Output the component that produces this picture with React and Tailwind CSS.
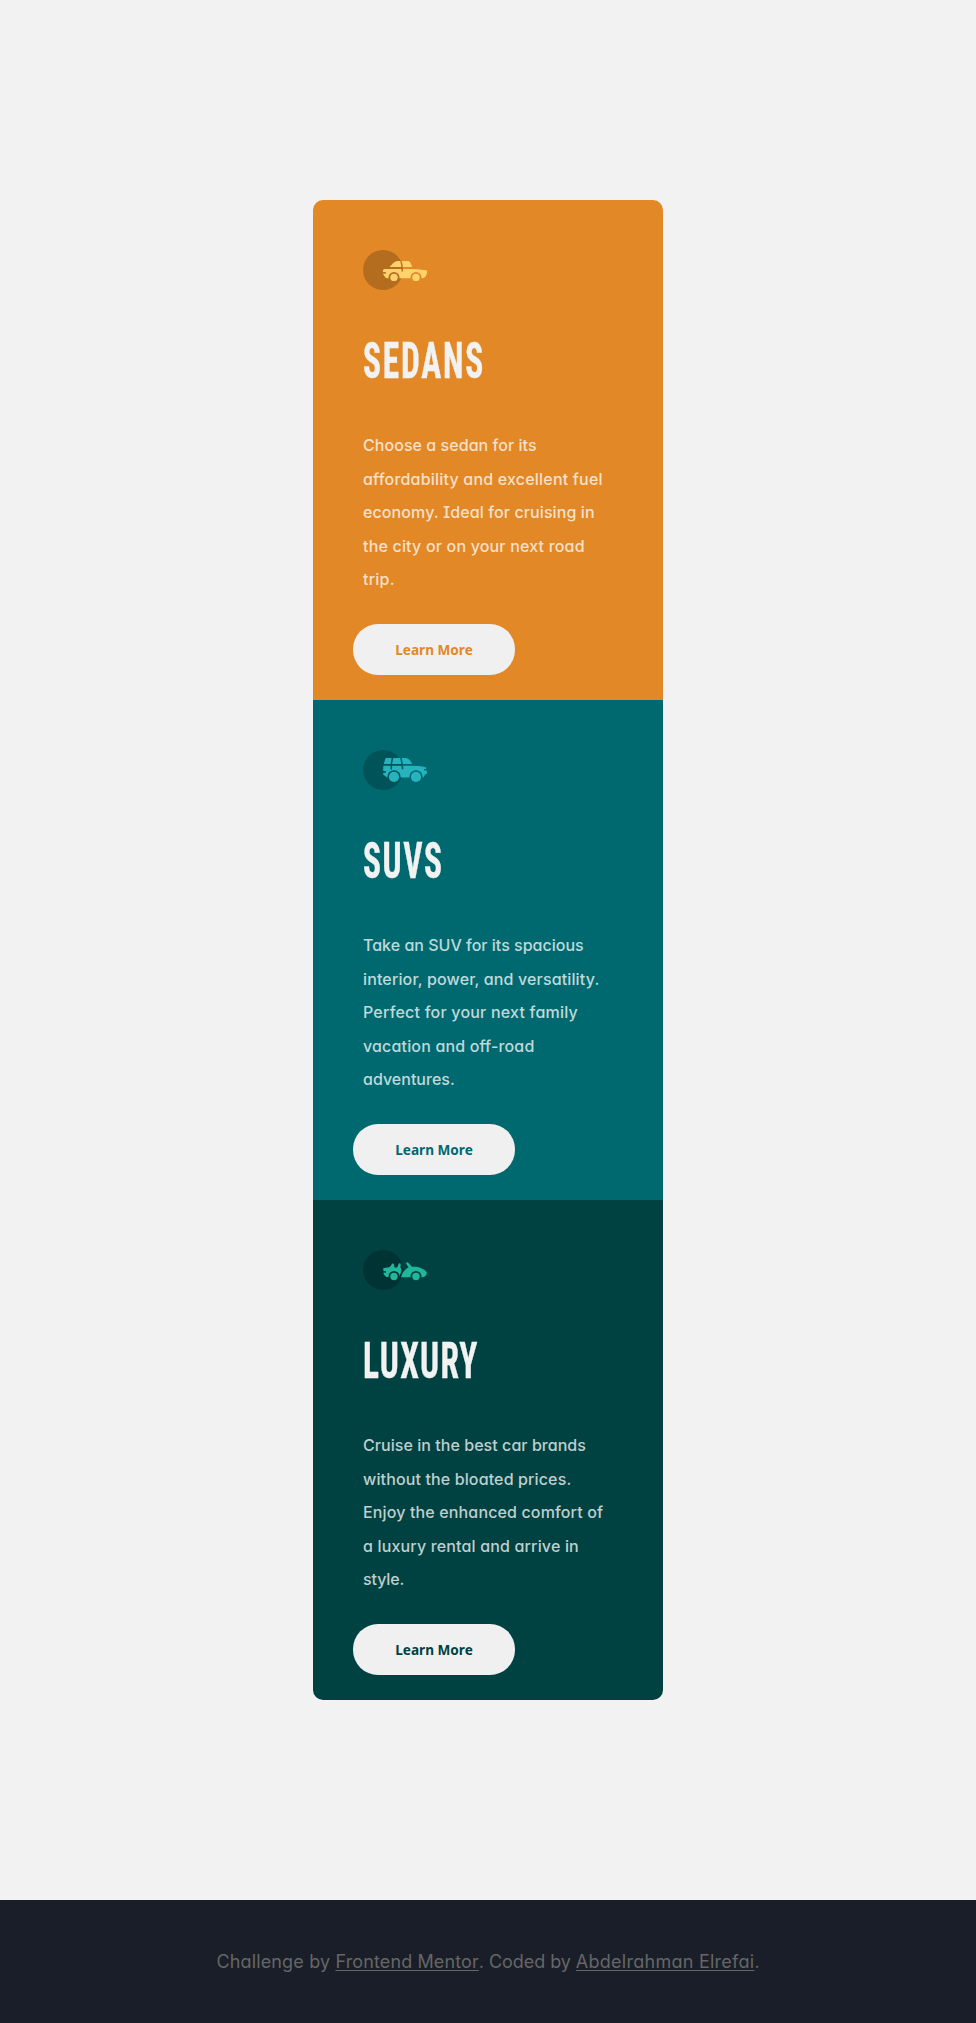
function SedanIcon() {
  return (
    <svg width="64" height="40" viewBox="0 0 64 40" className="block">
      <circle cx="20" cy="20" r="20" fill="#000" opacity="0.2" />
      <mask id="sedan-cut" maskUnits="userSpaceOnUse" x="0" y="0" width="66" height="40">
        <rect width="66" height="40" fill="#fff" />
        <circle cx="31" cy="27.4" r="5.5" fill="#000" />
        <circle cx="53" cy="27.4" r="5.5" fill="#000" />
        <path d="M37.9 10.5C39 13.5 39.4 17 39.4 21.6" fill="none" stroke="#000" strokeWidth="1.6" />
        <path d="M19 22.1H23V23.7H19Z" fill="#000" />
      </mask>
      <g fill="#FFD26C">
        <path
          mask="url(#sedan-cut)"
          d="M26.5 17C29.4 14 31.3 10.9 34.8 10.9H44.2C47.6 10.9 47.8 13.6 49.3 17ZM21 18.9H49.5C55 19.2 59.5 19.5 63.2 20.3C64.8 21.1 64.3 23.5 62.9 25.6C62.2 27.3 61.2 28.3 59 28.3H24.5C22.4 27.8 21.6 26.8 21 25.2L20 24.2V20.2Z"
        />
        <circle cx="31" cy="27.4" r="3.7" />
        <circle cx="53" cy="27.4" r="3.7" />
      </g>
    </svg>
  );
}

function SuvIcon() {
  return (
    <svg width="64" height="40" viewBox="0 0 64 40" className="block">
      <circle cx="20" cy="20" r="20" fill="#000" opacity="0.2" />
      <mask id="suv-cut" maskUnits="userSpaceOnUse" x="0" y="0" width="66" height="40">
        <rect width="66" height="40" fill="#fff" />
        <circle cx="31" cy="26.9" r="6.7" fill="#000" />
        <circle cx="53" cy="26.9" r="6.7" fill="#000" />
        <path d="M29.6 7.5L28.3 14V19.5" fill="none" stroke="#000" strokeWidth="1.5" />
        <path d="M37.8 7.5C39 12 39.4 15 39.6 19.2" fill="none" stroke="#000" strokeWidth="1.6" />
        <path d="M19 21H22.8V22.8H19Z" fill="#000" />
        <path d="M61 19H65V20.4H61Z" fill="#000" />
      </mask>
      <g fill="#26B3BE">
        <path
          mask="url(#suv-cut)"
          d="M22.6 8H43C46 8.6 48 11 49.2 14H20.8ZM20.4 15.8H50C56 16 60.5 16.4 63.2 17.4V20.4L64 21V23.2L62.2 24.6L60.3 27.4H24L20.2 24.6V17.5Z"
        />
        <circle cx="31" cy="26.9" r="5.1" />
        <circle cx="53" cy="26.9" r="5.1" />
      </g>
    </svg>
  );
}

function LuxuryIcon() {
  return (
    <svg width="64" height="40" viewBox="0 0 64 40" className="block">
      <circle cx="20" cy="20" r="20" fill="#000" opacity="0.2" />
      <mask id="luxury-cut" maskUnits="userSpaceOnUse" x="0" y="0" width="66" height="40">
        <rect width="66" height="40" fill="#fff" />
        <circle cx="31" cy="26.5" r="5.5" fill="#000" />
        <circle cx="53" cy="26.5" r="5.5" fill="#000" />
        <path d="M19 21.2H23V22.6H19Z" fill="#000" />
      </mask>
      <g fill="#1FB89A">
        <path
          mask="url(#luxury-cut)"
          d="M20.2 18.2L24 17.6C26 17.4 28 16.3 28.6 14.4C28.8 13.2 30.8 13.3 31 14.8L31.6 17.6H34.2L35.6 14C36 12.8 37.9 13.3 37.7 14.8L37.4 17.6C38.6 18.4 38.7 20.5 37.8 22.8L36 27H23.2L20.6 24.2Z"
        />
        <path
          mask="url(#luxury-cut)"
          d="M38 27.3C38.9 23.5 41.4 19.5 45.6 17.2L43.3 13.9C42.8 12.7 44.2 11.7 45.2 12.7L49.3 16.9C55.5 16.6 61.2 18.8 63.7 22.3C64.2 24 62.5 26.8 59.6 27.3Z"
        />
        <circle cx="31" cy="26.5" r="3.7" />
        <circle cx="53" cy="26.5" r="3.7" />
      </g>
    </svg>
  );
}

const CARDS = [
  {
    title: "SEDANS",
    titleTracking: "tracking-[2.7px]",
    Icon: SedanIcon,
    bg: "bg-[#e28827]",
    color: "text-[#e28827]",
    lines: [
      ["Choose a sedan for its", "tracking-[0.05px]"],
      ["affordability and excellent fuel", "tracking-[0.2px]"],
      ["economy. Ideal for cruising in", "tracking-[0.1px]"],
      ["the city or on your next road", "tracking-[0.18px]"],
      ["trip.", "tracking-[0.25px]"],
    ],
  },
  {
    title: "SUVS",
    titleTracking: "tracking-[2.4px]",
    Icon: SuvIcon,
    bg: "bg-[#006970]",
    color: "text-[#006970]",
    lines: [
      ["Take an SUV for its spacious", "tracking-[0.01px]"],
      ["interior, power, and versatility.", "tracking-[0.14px]"],
      ["Perfect for your next family", "tracking-[0.21px]"],
      ["vacation and off-road", "tracking-[0.16px]"],
      ["adventures.", "tracking-[0.02px]"],
    ],
  },
  {
    title: "LUXURY",
    titleTracking: "tracking-[1.9px]",
    Icon: LuxuryIcon,
    bg: "bg-[#004241]",
    color: "text-[#004241]",
    lines: [
      ["Cruise in the best car brands", "tracking-[0.05px]"],
      ["without the bloated prices.", "tracking-[0.13px]"],
      ["Enjoy the enhanced comfort of", "tracking-[0.14px]"],
      ["a luxury rental and arrive in", "tracking-[0.16px]"],
      ["style.", "tracking-[-0.1px]"],
    ],
  },
];

function Card({ title, titleTracking, Icon, bg, color, lines }) {
  return (
    <section className={`flex h-[500px] flex-col items-start px-[50px] pt-[50px] ${bg}`}>
      <Icon />
      <h2
        className={`mt-[41px] h-[60px] origin-left scale-x-[0.66] whitespace-nowrap font-['Roboto_Condensed',Roboto,sans-serif] text-[50.6px] leading-[60px] font-bold text-[#f2f2f2] [-webkit-text-stroke:0.4px_#f2f2f2] ${titleTracking}`}
      >
        {title}
      </h2>
      <p className="mt-[38px] h-[168px] text-base leading-[33.6px] font-[450] text-white/75">
        {lines.map(([text, tracking]) => (
          <span key={text} className={`block whitespace-nowrap ${tracking}`}>
            {text}
          </span>
        ))}
      </p>
      <button
        className={`mt-[27px] -ml-2.5 h-[51px] w-[162px] rounded-[25px] bg-[#f0f0f0] pt-0.5 font-['Noto_Sans',sans-serif] text-[13.6px] font-bold ${color}`}
      >
        Learn More
      </button>
    </section>
  );
}

export default function App() {
  return (
    <div className="flex min-h-[2023px] flex-col bg-[#f2f2f2] font-[Inter,sans-serif] [font-feature-settings:'cv11','cv08']">
      <main className="mx-auto mt-[200px] w-[350px] overflow-hidden rounded-[10px]">
        {CARDS.map((card) => (
          <Card key={card.title} {...card} />
        ))}
      </main>
      <footer className="mt-[200px] flex h-[123px] items-center justify-center bg-[#1a1e28] text-lg text-[#666]">
        <p className="whitespace-pre">
          <span className="tracking-[0.15px]">Challenge by </span>
          <a className="tracking-[0.12px] underline decoration-1 underline-offset-2" href="#">Frontend Mentor</a>
          <span className="tracking-[-0.06px]">. Coded by </span>
          <a className="tracking-[0.26px] underline decoration-1 underline-offset-2" href="#">Abdelrahman Elrefai</a>.
        </p>
      </footer>
    </div>
  );
}
